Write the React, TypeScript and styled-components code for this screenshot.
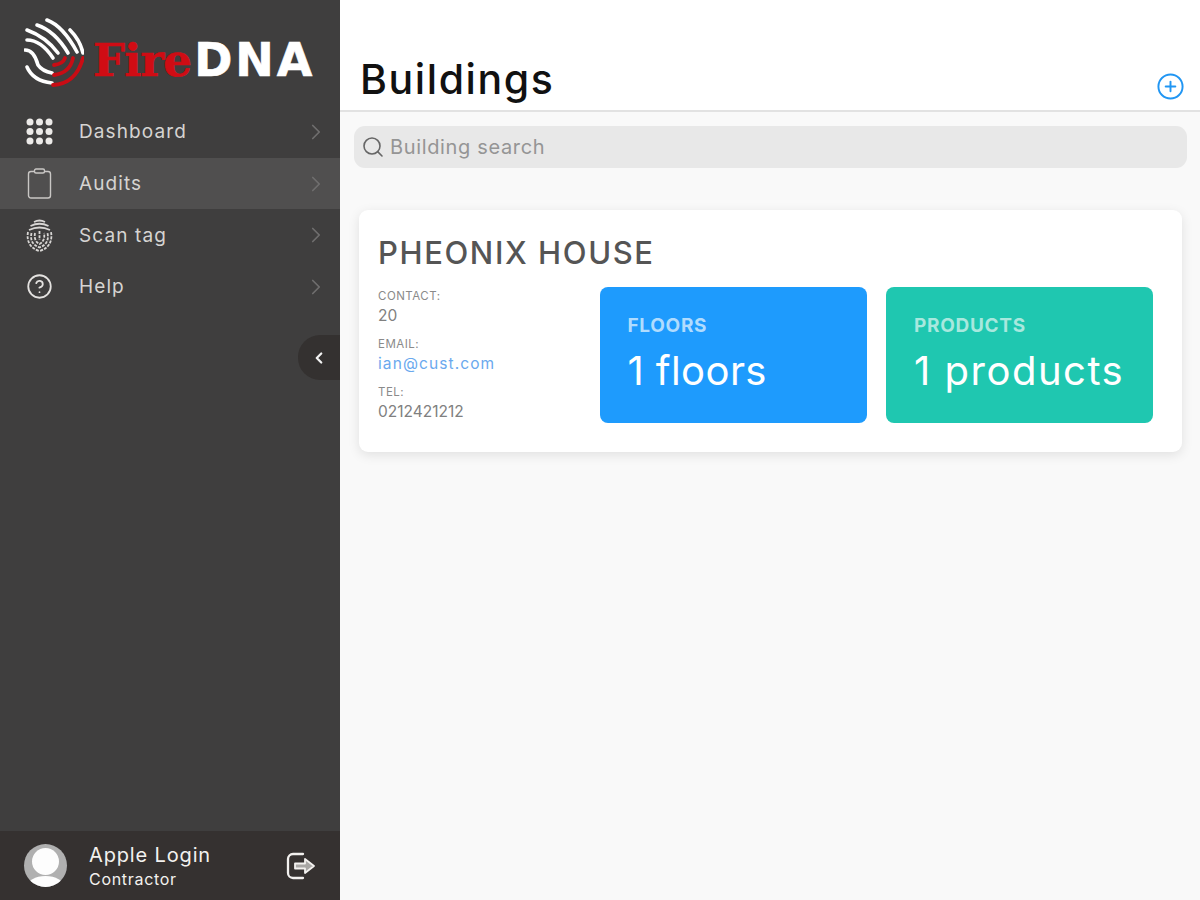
import React from "react";
import styled, { createGlobalStyle } from "styled-components";
import { ChevronRight, ChevronLeft, Search, CirclePlus, CircleHelp } from "lucide-react";

const Global = createGlobalStyle`
  html, body { margin: 0; padding: 0; height: 100%; }
  body { font-family: Inter, "Open Sans", sans-serif; background: #f9f9f9; }
  * { box-sizing: border-box; }
`;

const Page = styled.div`
  display: flex;
  width: 1200px;
  height: 900px;
  overflow: hidden;
`;
const Sidebar = styled.aside`
  position: relative;
  flex: 0 0 340px;
  display: flex;
  flex-direction: column;
  background: #3f3e3e;
`;
const LogoRow = styled.div`
  height: 106px;
  display: flex;
  align-items: flex-start;
  padding: 18px 0 0 24px;
`;
const Wordmark = styled.div`
  display: flex;
  align-items: baseline;
  margin: 14px 0 0 9px;
  font-weight: 700;
  line-height: 56px;
  white-space: nowrap;
`;
const Fire = styled.span`
  font-family: "DejaVu Serif", serif;
  font-size: 45px;
  letter-spacing: -0.8px;
  color: #d00c14;
  -webkit-text-stroke: 0.7px #d00c14;
`;
const Dna = styled.span`
  font-family: "DejaVu Sans", sans-serif;
  font-size: 46px;
  letter-spacing: 3px;
  color: #ffffff;
  margin-left: 3px;
  -webkit-text-stroke: 0.6px #ffffff;
`;
const Nav = styled.nav`
  display: flex;
  flex-direction: column;
`;
const NavItem = styled.div<{ $active?: boolean }>`
  height: 51.7px;
  display: flex;
  align-items: center;
  padding: 0 11px 0 26px;
  background: ${(p) => (p.$active ? "#504f4f" : "transparent")};
  color: #d6d4d2;
`;
const NavIcon = styled.span`
  flex: 0 0 27px;
  height: 33px;
  display: flex;
  align-items: center;
  justify-content: center;
  color: #e4e2e0;
`;
const NavLabel = styled.span`
  flex: 1;
  margin-left: 26px;
  font-size: 19px;
  font-weight: 400;
  letter-spacing: 1.1px;
`;
const Chevron = styled(ChevronRight)`
  color: #6f6e6e;
`;
const CollapseTab = styled.div`
  position: absolute;
  left: 298px;
  top: 335px;
  width: 42px;
  height: 45px;
  display: flex;
  align-items: center;
  justify-content: center;
  border-radius: 22px 0 0 22px;
  background: #343130;
  color: #f2f2f2;
`;
const Footer = styled.footer`
  margin-top: auto;
  height: 69px;
  display: flex;
  align-items: center;
  padding: 0 24px;
  background: #353130;
`;
const Avatar = styled.div`
  position: relative;
  width: 43px;
  height: 43px;
  border-radius: 50%;
  overflow: hidden;
  background: #b0b0b0;
`;
const AvatarHead = styled.span`
  position: absolute;
  left: 8px;
  top: 4px;
  width: 27px;
  height: 27px;
  border-radius: 50%;
  background: #fdfdfd;
`;
const AvatarBody = styled.span`
  position: absolute;
  left: 3px;
  top: 32px;
  width: 37px;
  height: 22px;
  border-radius: 50%;
  background: #fdfdfd;
`;
const UserBlock = styled.div`
  flex: 1;
  margin-left: 22px;
  display: flex;
  flex-direction: column;
  gap: 3px;
  color: #f3f1ef;
`;
const UserName = styled.span`
  font-size: 20px;
  line-height: 24px;
  letter-spacing: 0.85px;
`;
const UserRole = styled.span`
  font-size: 16px;
  line-height: 19px;
  letter-spacing: 0.7px;
`;
const Main = styled.main`
  flex: 1;
  min-width: 0;
  display: flex;
  flex-direction: column;
`;
const Header = styled.header`
  height: 112px;
  display: flex;
  align-items: flex-end;
  justify-content: space-between;
  padding: 0 15px 9px 20px;
  background: #ffffff;
  border-bottom: 2px solid #e2e2e2;
`;
const Title = styled.h1`
  margin: 0 0 -3px;
  font-size: 41px;
  line-height: 50px;
  font-weight: 500;
  letter-spacing: 1.6px;
  color: #111;
`;
const SearchBar = styled.div`
  margin: 14px 13px 0 14px;
  height: 42px;
  display: flex;
  align-items: center;
  gap: 5px;
  padding: 0 7px;
  border-radius: 11px;
  background: #e8e8e8;
  color: #959595;
  font-size: 20px;
  letter-spacing: 0.65px;
`;
const Card = styled.section`
  margin: 42px 18px 0 19px;
  height: 242px;
  padding: 23px 28px 28px 19px;
  border-radius: 9px;
  background: #fff;
  box-shadow: 0 3px 12px rgba(0, 0, 0, 0.1);
`;
const CardTitle = styled.h2`
  margin: 0;
  font-size: 31px;
  line-height: 40px;
  font-weight: 500;
  letter-spacing: 1.6px;
  color: #555;
`;
const CardBody = styled.div`
  display: flex;
  gap: 19.5px;
  margin-top: 14px;
`;
const Details = styled.dl`
  flex: 0 0 202px;
  margin: 0;
`;
const DetailLabel = styled.dt`
  font-size: 11.5px;
  line-height: 14px;
  margin-top: 11px;
  letter-spacing: 0.5px;
  color: #8a8a8a;
  &:first-child { margin-top: 2px; }
`;
const DetailValue = styled.dd<{ $link?: boolean }>`
  margin: 3px 0 0;
  font-size: 15.5px;
  line-height: 20px;
  letter-spacing: ${(p) => (p.$link ? "1.1px" : "0")};
  color: ${(p) => (p.$link ? "#6aa9ee" : "#808080")};
`;
const Tile = styled.div<{ $bg: string }>`
  flex: 0 0 267px;
  height: 136px;
  padding: 27px 28px;
  border-radius: 8px;
  background: ${(p) => p.$bg};
  color: #fff;
  white-space: nowrap;
`;
const TileLabel = styled.div<{ $tint: string }>`
  font-size: 19px;
  line-height: 24px;
  font-weight: 700;
  letter-spacing: 0.7px;
  color: ${(p) => p.$tint};
`;
const TileValue = styled.div<{ $tracking: number }>`
  margin-top: 8px;
  font-size: 40px;
  line-height: 50px;
  font-weight: 400;
  letter-spacing: ${(p) => p.$tracking}px;
`;

const FingerprintLogo = () => (
  <svg width="60" height="70" viewBox="0 0 60 70" fill="none" strokeLinecap="round">
    <g stroke="#fff" strokeWidth="3.6">
      <path d="M23 2Q39 8 53 34" />
      <path d="M13 7Q31 13 44 35" />
      <path d="M3 12Q22 19 34 35" />
      <path d="M3 22Q17 22 29 40" />
      <path d="M1 32Q10 32 14 47Q18 53 28 55" />
      <path d="M3 49Q9 63 28 65" />
      <path d="M46 12Q56 22 59 35" />
    </g>
    <g stroke="#c90c14" strokeWidth="3.8">
      <path d="M29 67Q52 66 59 40" />
      <path d="M30 57Q46 55 49 40" />
      <path d="M30 47Q39 46 41 40" />
    </g>
  </svg>
);
const GridIcon = () => (
  <svg width="27" height="27" viewBox="0 0 27 27" fill="#eceae8">
    {[4, 13.5, 23].flatMap((y) =>
      [4, 13.5, 23].map((x) => <circle key={`${x}-${y}`} cx={x} cy={y} r="3.5" />)
    )}
  </svg>
);
const ClipboardIcon = () => (
  <svg width="25" height="31" viewBox="0 0 25 31" fill="none" stroke="#c9c7c5" strokeWidth="1.4">
    <rect x="1.5" y="3.5" width="22" height="26.5" rx="2.5" />
    <rect x="7.5" y="1" width="10" height="4" rx="1.5" fill="#504f4f" />
  </svg>
);
const FingerprintIcon = () => (
  <svg width="27" height="33" viewBox="0 0 27 33" fill="none" stroke="#d8d6d4" strokeWidth="1.8">
    <path d="M8 3Q13.5 0 19 3" />
    <path d="M4.5 7Q13.5 2.5 22.5 7" />
    <path d="M3 11Q13.5 6 24 11" />
    <g strokeDasharray="3 1.2">
      <path d="M2 13C0.5 21 3 29 13.5 32C24 29 26.5 21 25 13" />
      <path d="M5.5 14C4 21 6.5 26 13.5 28.5C20.5 26 23 21 21.5 14" />
      <path d="M9 14C8 19 9.5 23 13.5 25C17.5 23 19 19 18 14" />
      <path d="M13.5 12V21" />
    </g>
  </svg>
);
const SignOutIcon = () => (
  <svg width="30" height="28" viewBox="0 0 30 28" fill="none" stroke="#f3f1ef" strokeLinejoin="round" strokeLinecap="round">
    <path strokeWidth="2.3" d="M17 2H7A5 5 0 0 0 2 7V21A5 5 0 0 0 7 26H17" />
    <path strokeWidth="1.8" fill="#a9a7a5" d="M9 11.5H19V7L28 14L19 21V16.5H9Z" />
  </svg>
);

const nav = [
  { label: "Dashboard", icon: <GridIcon /> },
  { label: "Audits", icon: <ClipboardIcon />, active: true },
  { label: "Scan tag", icon: <FingerprintIcon /> },
  { label: "Help", icon: <CircleHelp size={27} strokeWidth={1.6} /> },
];

export default function App() {
  return (
    <Page>
      <Global />
      <Sidebar>
        <LogoRow>
          <FingerprintLogo />
          <Wordmark>
            <Fire>Fire</Fire>
            <Dna>DNA</Dna>
          </Wordmark>
        </LogoRow>
        <Nav>
          {nav.map((n) => (
            <NavItem key={n.label} $active={n.active}>
              <NavIcon>{n.icon}</NavIcon>
              <NavLabel>{n.label}</NavLabel>
              <Chevron size={26} strokeWidth={1.6} />
            </NavItem>
          ))}
        </Nav>
        <CollapseTab>
          <ChevronLeft size={18} strokeWidth={3} />
        </CollapseTab>
        <Footer>
          <Avatar>
            <AvatarHead />
            <AvatarBody />
          </Avatar>
          <UserBlock>
            <UserName>Apple Login</UserName>
            <UserRole>Contractor</UserRole>
          </UserBlock>
          <SignOutIcon />
        </Footer>
      </Sidebar>
      <Main>
        <Header>
          <Title>Buildings</Title>
          <CirclePlus size={29} strokeWidth={1.6} color="#2196f3" />
        </Header>
        <SearchBar>
          <Search size={24} strokeWidth={1.6} color="#666" />
          Building search
        </SearchBar>
        <Card>
          <CardTitle>PHEONIX HOUSE</CardTitle>
          <CardBody>
            <Details>
              <DetailLabel>CONTACT:</DetailLabel>
              <DetailValue>20</DetailValue>
              <DetailLabel>EMAIL:</DetailLabel>
              <DetailValue $link>ian@cust.com</DetailValue>
              <DetailLabel>TEL:</DetailLabel>
              <DetailValue>0212421212</DetailValue>
            </Details>
            <Tile $bg="#1e9bfd">
              <TileLabel $tint="#b0dcfe">FLOORS</TileLabel>
              <TileValue $tracking={0.4}>1 floors</TileValue>
            </Tile>
            <Tile $bg="#1fc7b0">
              <TileLabel $tint="#a8e8de">PRODUCTS</TileLabel>
              <TileValue $tracking={1.5}>1 products</TileValue>
            </Tile>
          </CardBody>
        </Card>
      </Main>
    </Page>
  );
}
